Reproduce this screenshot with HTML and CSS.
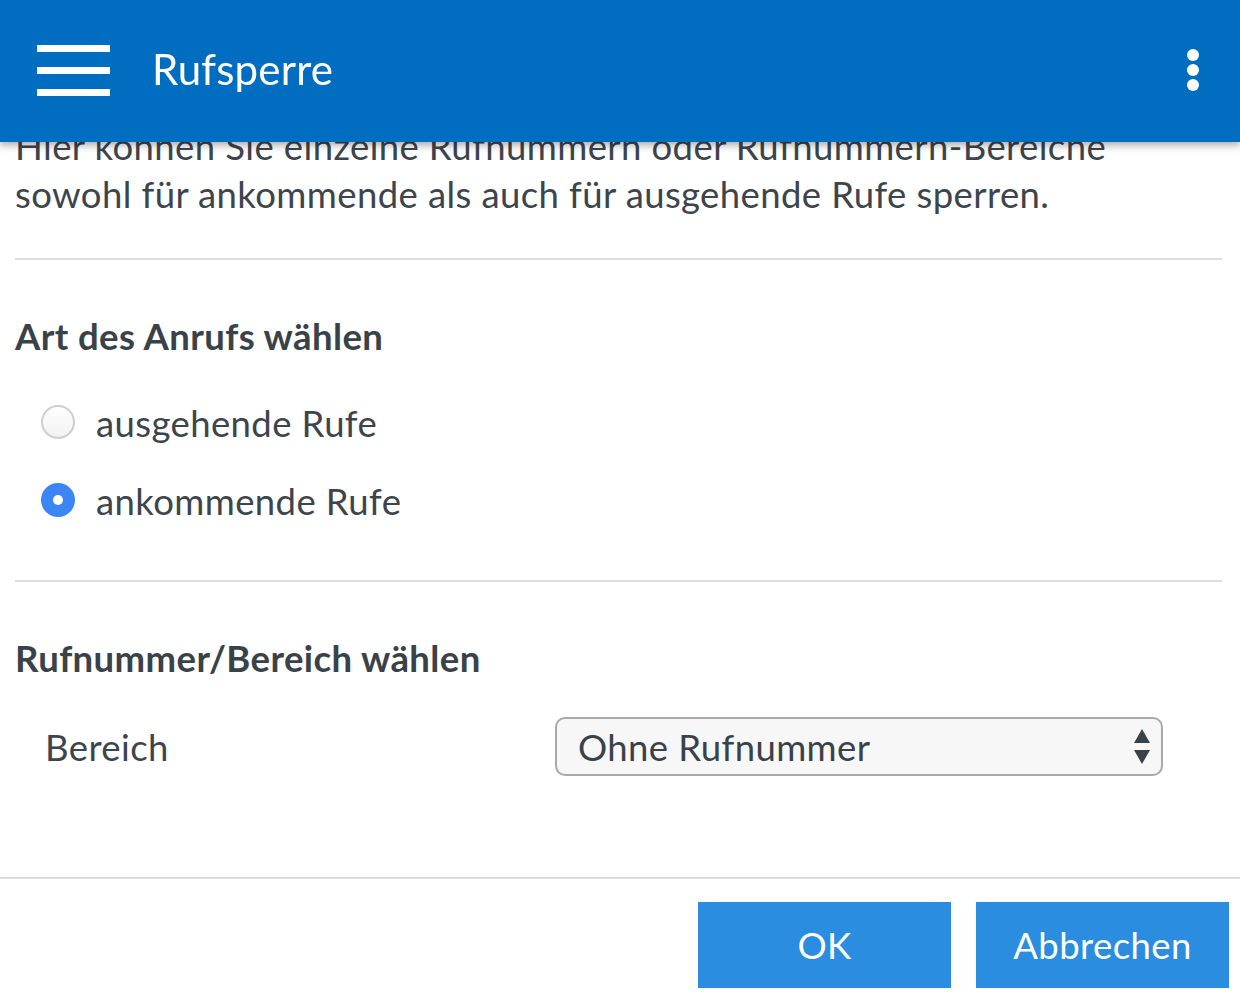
FILE: index.html
```html
<!DOCTYPE html>
<html lang="de">
<head>
<meta charset="utf-8">
<title>Rufsperre</title>
<link rel="stylesheet" href="styles.css">
</head>
<body>
<header class="appbar">
  <div class="hamburger"><span></span><span></span><span></span></div>
  <h1 class="title">Rufsperre</h1>
  <svg class="kebab" width="14" height="44" viewBox="0 0 14 44"><circle cx="7" cy="7" r="6" fill="#fff"/><circle cx="7" cy="22" r="6" fill="#fff"/><circle cx="7" cy="37" r="6" fill="#fff"/></svg>
</header>
<main class="content">
  <p class="intro">Hier können Sie einzelne Rufnummern oder Rufnummern-Bereiche sowohl für ankommende als auch für ausgehende Rufe sperren.</p>
  <hr class="divider">
  <h2 class="section-title">Art des Anrufs wählen</h2>
  <div class="radio-row"><span class="radio"></span><span class="radio-label">ausgehende Rufe</span></div>
  <div class="radio-row"><span class="radio checked"></span><span class="radio-label">ankommende Rufe</span></div>
  <hr class="divider">
  <h2 class="section-title">Rufnummer/Bereich wählen</h2>
  <div class="field-row">
    <span class="field-label">Bereich</span>
    <div class="select">
      <span class="select-value">Ohne Rufnummer</span>
      <svg class="select-arrows" width="18" height="38" viewBox="0 0 18 38"><path d="M9 1 L17 15 L1 15 Z" fill="#3a4249"/><path d="M1 22 L17 22 L9 36 Z" fill="#3a4249"/></svg>
    </div>
  </div>
</main>
<footer class="actions">
  <button class="btn">OK</button>
  <button class="btn">Abbrechen</button>
</footer>
</body>
</html>
```
FILE: styles.css
```css
html, body {
  margin: 0;
  padding: 0;
  background: #fff;
}
body {
  font-family: Lato, "Open Sans", sans-serif;
  color: #3d454c;
  width: 1240px;
  height: 1006px;
  overflow: hidden;
}
.appbar {
  position: fixed;
  top: 0;
  left: 0;
  width: 1240px;
  height: 142px;
  background: #006dc1;
  box-shadow: 0 3px 8px rgba(0,0,0,0.35);
  display: flex;
  align-items: center;
  box-sizing: border-box;
  padding: 0 40px 0 37px;
  z-index: 2;
}
.hamburger {
  width: 73px;
  height: 51px;
  display: flex;
  flex-direction: column;
  justify-content: space-between;
  margin-top: -2px;
}
.hamburger span {
  display: block;
  height: 7px;
  background: #fff;
}
.title {
  margin: -4px 0 0 42px;
  font-size: 42px;
  font-weight: 400;
  letter-spacing: 0.2px;
  color: #fff;
  flex: 1;
}
.kebab {
  display: block;
  margin-top: -2px;
}
.content {
  padding: 122px 18px 0 15px;
}
.intro {
  margin: 0;
  max-width: 1110px;
  font-size: 36.5px;
  letter-spacing: 0.4px;
  line-height: 48px;
}
.divider {
  border: 0;
  height: 2px;
  background: #dedede;
  margin: 40px 0 0 0;
}
.section-title {
  margin: 52px 0 0 0;
  font-size: 36.5px;
  letter-spacing: 0.4px;
  line-height: 48px;
  font-weight: 700;
  color: #3a4249;
}
.radio-row {
  display: flex;
  align-items: center;
  height: 78px;
  padding-left: 26px;
}
.section-title + .radio-row {
  margin-top: 24px;
}
.radio {
  width: 34px;
  height: 34px;
  box-sizing: border-box;
  border-radius: 50%;
  border: 2px solid #cfcfcf;
  background: linear-gradient(#fff, #f2f2f2);
  margin-right: 21px;
  position: relative;
  margin-top: -2px;
}
.radio.checked {
  border: 0;
  background: #3b86f4;
}
.radio.checked::after {
  content: "";
  position: absolute;
  left: 12px;
  top: 12px;
  width: 10px;
  height: 10px;
  border-radius: 50%;
  background: #fff;
}
.radio-label {
  font-size: 36.5px;
  letter-spacing: 0.4px;
  line-height: 48px;
}
.field-row {
  display: grid;
  grid-template-columns: 510px 608px;
  align-items: center;
  padding-left: 30px;
  margin-top: 35px;
}
.field-label {
  font-size: 36.5px;
  letter-spacing: 0.4px;
  line-height: 48px;
}
.select {
  height: 59px;
  box-sizing: border-box;
  border: 2px solid #a9a9a9;
  border-radius: 10px;
  background: #f7f7f7;
  display: flex;
  align-items: center;
  padding: 0 10px 0 21px;
  position: relative;
}
.select-value {
  flex: 1;
  font-size: 36.5px;
  letter-spacing: 0.4px;
  line-height: 48px;
  color: #3a4249;
}
.select-arrows {
  display: block;
}
.actions {
  position: absolute;
  left: 0;
  top: 877px;
  width: 1240px;
  border-top: 2px solid #dcdcdc;
  display: flex;
  justify-content: flex-end;
  gap: 25px;
  padding: 23px 11px 0 0;
  box-sizing: border-box;
}
.btn {
  width: 253px;
  height: 86px;
  border: 0;
  background: #2a8de0;
  color: #fff;
  font-family: Lato, "Open Sans", sans-serif;
  font-size: 36.5px;
  letter-spacing: 0.4px;
  padding: 0;
}
```
